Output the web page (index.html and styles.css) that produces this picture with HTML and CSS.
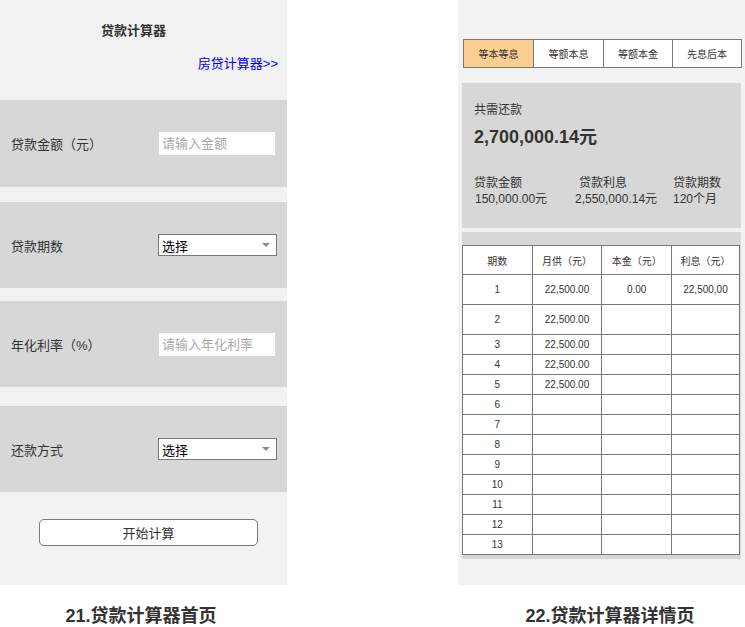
FILE: index.html
```html
<!DOCTYPE html>
<html lang="zh-CN">
<head>
<meta charset="utf-8">
<title>贷款计算器</title>
<link rel="stylesheet" href="styles.css">
</head>
<body>
<div class="page">
  <section class="screen">
    <div class="panel home">
      <header class="home-head">
        <h1 class="home-title">贷款计算器</h1>
        <a class="home-link">房贷计算器&gt;&gt;</a>
      </header>
      <div class="field field-1">
        <span class="field-label">贷款金额（元）</span>
        <span class="input placeholder">请输入金额</span>
      </div>
      <div class="field field-2">
        <span class="field-label">贷款期数</span>
        <span class="select"><span>选择</span><i class="caret"></i></span>
      </div>
      <div class="field field-3">
        <span class="field-label">年化利率（%）</span>
        <span class="input placeholder">请输入年化利率</span>
      </div>
      <div class="field field-4">
        <span class="field-label">还款方式</span>
        <span class="select"><span>选择</span><i class="caret"></i></span>
      </div>
      <div class="actions"><button class="btn">开始计算</button></div>
    </div>
    <p class="caption caption-left">21.贷款计算器首页</p>
  </section>

  <section class="screen">
    <div class="panel detail">
      <div class="tabs">
        <span class="tab active">等本等息</span>
        <span class="tab">等额本息</span>
        <span class="tab">等额本金</span>
        <span class="tab">先息后本</span>
      </div>
      <div class="summary">
        <div class="summary-label">共需还款</div>
        <div class="summary-total">2,700,000.14元</div>
        <div class="stats">
          <span class="stat-label">贷款金额</span>
          <span class="stat-label stat-indent">贷款利息</span>
          <span class="stat-label">贷款期数</span>
          <span class="stat-value">150,000.00元</span>
          <span class="stat-value">2,550,000.14元</span>
          <span class="stat-value">120个月</span>
        </div>
      </div>
      <div class="table-box">
        <table class="plan">
          <thead>
            <tr class="row-head"><th>期数</th><th>月供（元）</th><th>本金（元）</th><th>利息（元）</th></tr>
          </thead>
          <tbody>
            <tr class="row-tall"><td>1</td><td>22,500.00</td><td>0.00</td><td>22,500,00</td></tr>
            <tr class="row-tall"><td>2</td><td>22,500.00</td><td></td><td></td></tr>
            <tr><td>3</td><td>22,500.00</td><td></td><td></td></tr>
            <tr><td>4</td><td>22,500.00</td><td></td><td></td></tr>
            <tr><td>5</td><td>22,500.00</td><td></td><td></td></tr>
            <tr><td>6</td><td></td><td></td><td></td></tr>
            <tr><td>7</td><td></td><td></td><td></td></tr>
            <tr><td>8</td><td></td><td></td><td></td></tr>
            <tr><td>9</td><td></td><td></td><td></td></tr>
            <tr><td>10</td><td></td><td></td><td></td></tr>
            <tr><td>11</td><td></td><td></td><td></td></tr>
            <tr><td>12</td><td></td><td></td><td></td></tr>
            <tr><td>13</td><td></td><td></td><td></td></tr>
          </tbody>
        </table>
      </div>
    </div>
    <p class="caption caption-right">22.贷款计算器详情页</p>
  </section>
</div>
</body>
</html>
```

FILE: styles.css
```css
* { box-sizing: border-box; }

html, body {
  margin: 0;
  padding: 0;
  background: #ffffff;
}

body {
  font-family: "Liberation Sans", "Noto Sans CJK SC", sans-serif;
  color: #333333;
  width: 745px;
  height: 627px;
  overflow: hidden;
}

.page {
  display: flex;
  gap: 171px;
}

.screen {
  width: 287px;
  flex: 0 0 287px;
}

.panel {
  height: 585px;
  background: #f2f2f2;
}

/* ---------- home ---------- */
.home-head {
  height: 100px;
  padding-top: 22px;
}

.home-title {
  margin: 0;
  font-size: 13px;
  line-height: 18px;
  font-weight: bold;
  text-align: center;
  padding-right: 20px;
  color: #333333;
}

.home-link {
  display: block;
  margin-top: 15px;
  padding-right: 9px;
  text-align: right;
  font-size: 13px;
  line-height: 18px;
  color: #0000ff;
}

.field {
  display: flex;
  align-items: center;
  height: 86px;
  padding-left: 11px;
  background: #d7d7d7;
  font-size: 13px;
}

.field-1 { height: 87px; }
.field-2 { margin-top: 15px; }
.field-3 { margin-top: 13px; }
.field-4 { margin-top: 19px; }

.field-label {
  width: 147px;
  flex: 0 0 147px;
  color: #333333;
}

.input {
  margin-left: 1px;
  width: 116px;
  height: 23px;
  line-height: 23px;
  padding-left: 3px;
  background: #ffffff;
}

.placeholder {
  color: #a9a9a9;
}

.select {
  display: flex;
  align-items: center;
  justify-content: space-between;
  width: 119px;
  height: 22px;
  padding: 0 6px 0 3px;
  background: #ffffff;
  border: 1px solid #797979;
  color: #000000;
}

.caret {
  width: 0;
  height: 0;
  border-left: 4px solid transparent;
  border-right: 4px solid transparent;
  border-top: 4px solid #8a8a8a;
}

.actions {
  padding: 27px 0 0 39px;
}

.btn {
  display: block;
  width: 219px;
  height: 27px;
  padding: 0;
  border: 1px solid #797979;
  border-radius: 5px;
  background: #ffffff;
  font-family: inherit;
  font-size: 13px;
  color: #333333;
}

.caption {
  margin: 19px 0 0;
  font-size: 18px;
  line-height: 24px;
  font-weight: bold;
  text-align: center;
  color: #333333;
}

.caption-left { padding-right: 5px; }
.caption-right { padding-left: 17px; }

/* ---------- detail ---------- */
.detail {
  padding-top: 39px;
}

.tabs {
  display: grid;
  grid-template-columns: 69px 70px 69px 1fr;
  margin: 0 3px 0 5px;
  height: 29px;
  border: 1px solid #797979;
  background: #ffffff;
}

.tab {
  display: flex;
  align-items: center;
  justify-content: center;
  font-size: 10px;
  color: #333333;
  border-left: 1px solid #797979;
}

.tab:first-child { border-left: 0; }

.tab.active { background: #facd91; }

.summary {
  margin: 15px 4px 0 4px;
  height: 145px;
  padding: 19px 0 0 12px;
  background: #d7d7d7;
}

.summary-label {
  font-size: 12px;
  line-height: 16px;
}

.summary-total {
  margin-top: 8px;
  font-size: 18px;
  line-height: 22px;
  font-weight: bold;
}

.stats {
  display: grid;
  grid-template-columns: 100px 99px 1fr;
  margin-top: 27px;
  font-size: 12px;
  line-height: 16px;
}

.stat-indent { padding-left: 5px; }

.stat-value { padding-left: 1px; }
.stat-value:nth-child(6) { padding-left: 0; }

.table-box {
  margin: 4px 4px 0 4px;
  padding: 13px 1px 4px 0;
  background: #d7d7d7;
}

.plan {
  width: 278px;
  border-collapse: collapse;
  table-layout: fixed;
  background: #ffffff;
  font-size: 10px;
  color: #333333;
}

.plan th,
.plan td {
  border: 1px solid #797979;
  padding: 0;
  text-align: center;
  font-weight: normal;
  height: 20px;
}

.plan th:nth-child(4),
.plan td:nth-child(4) { width: 68px; }

.row-head th { height: 29px; }
.row-tall td { height: 30px; }
```
